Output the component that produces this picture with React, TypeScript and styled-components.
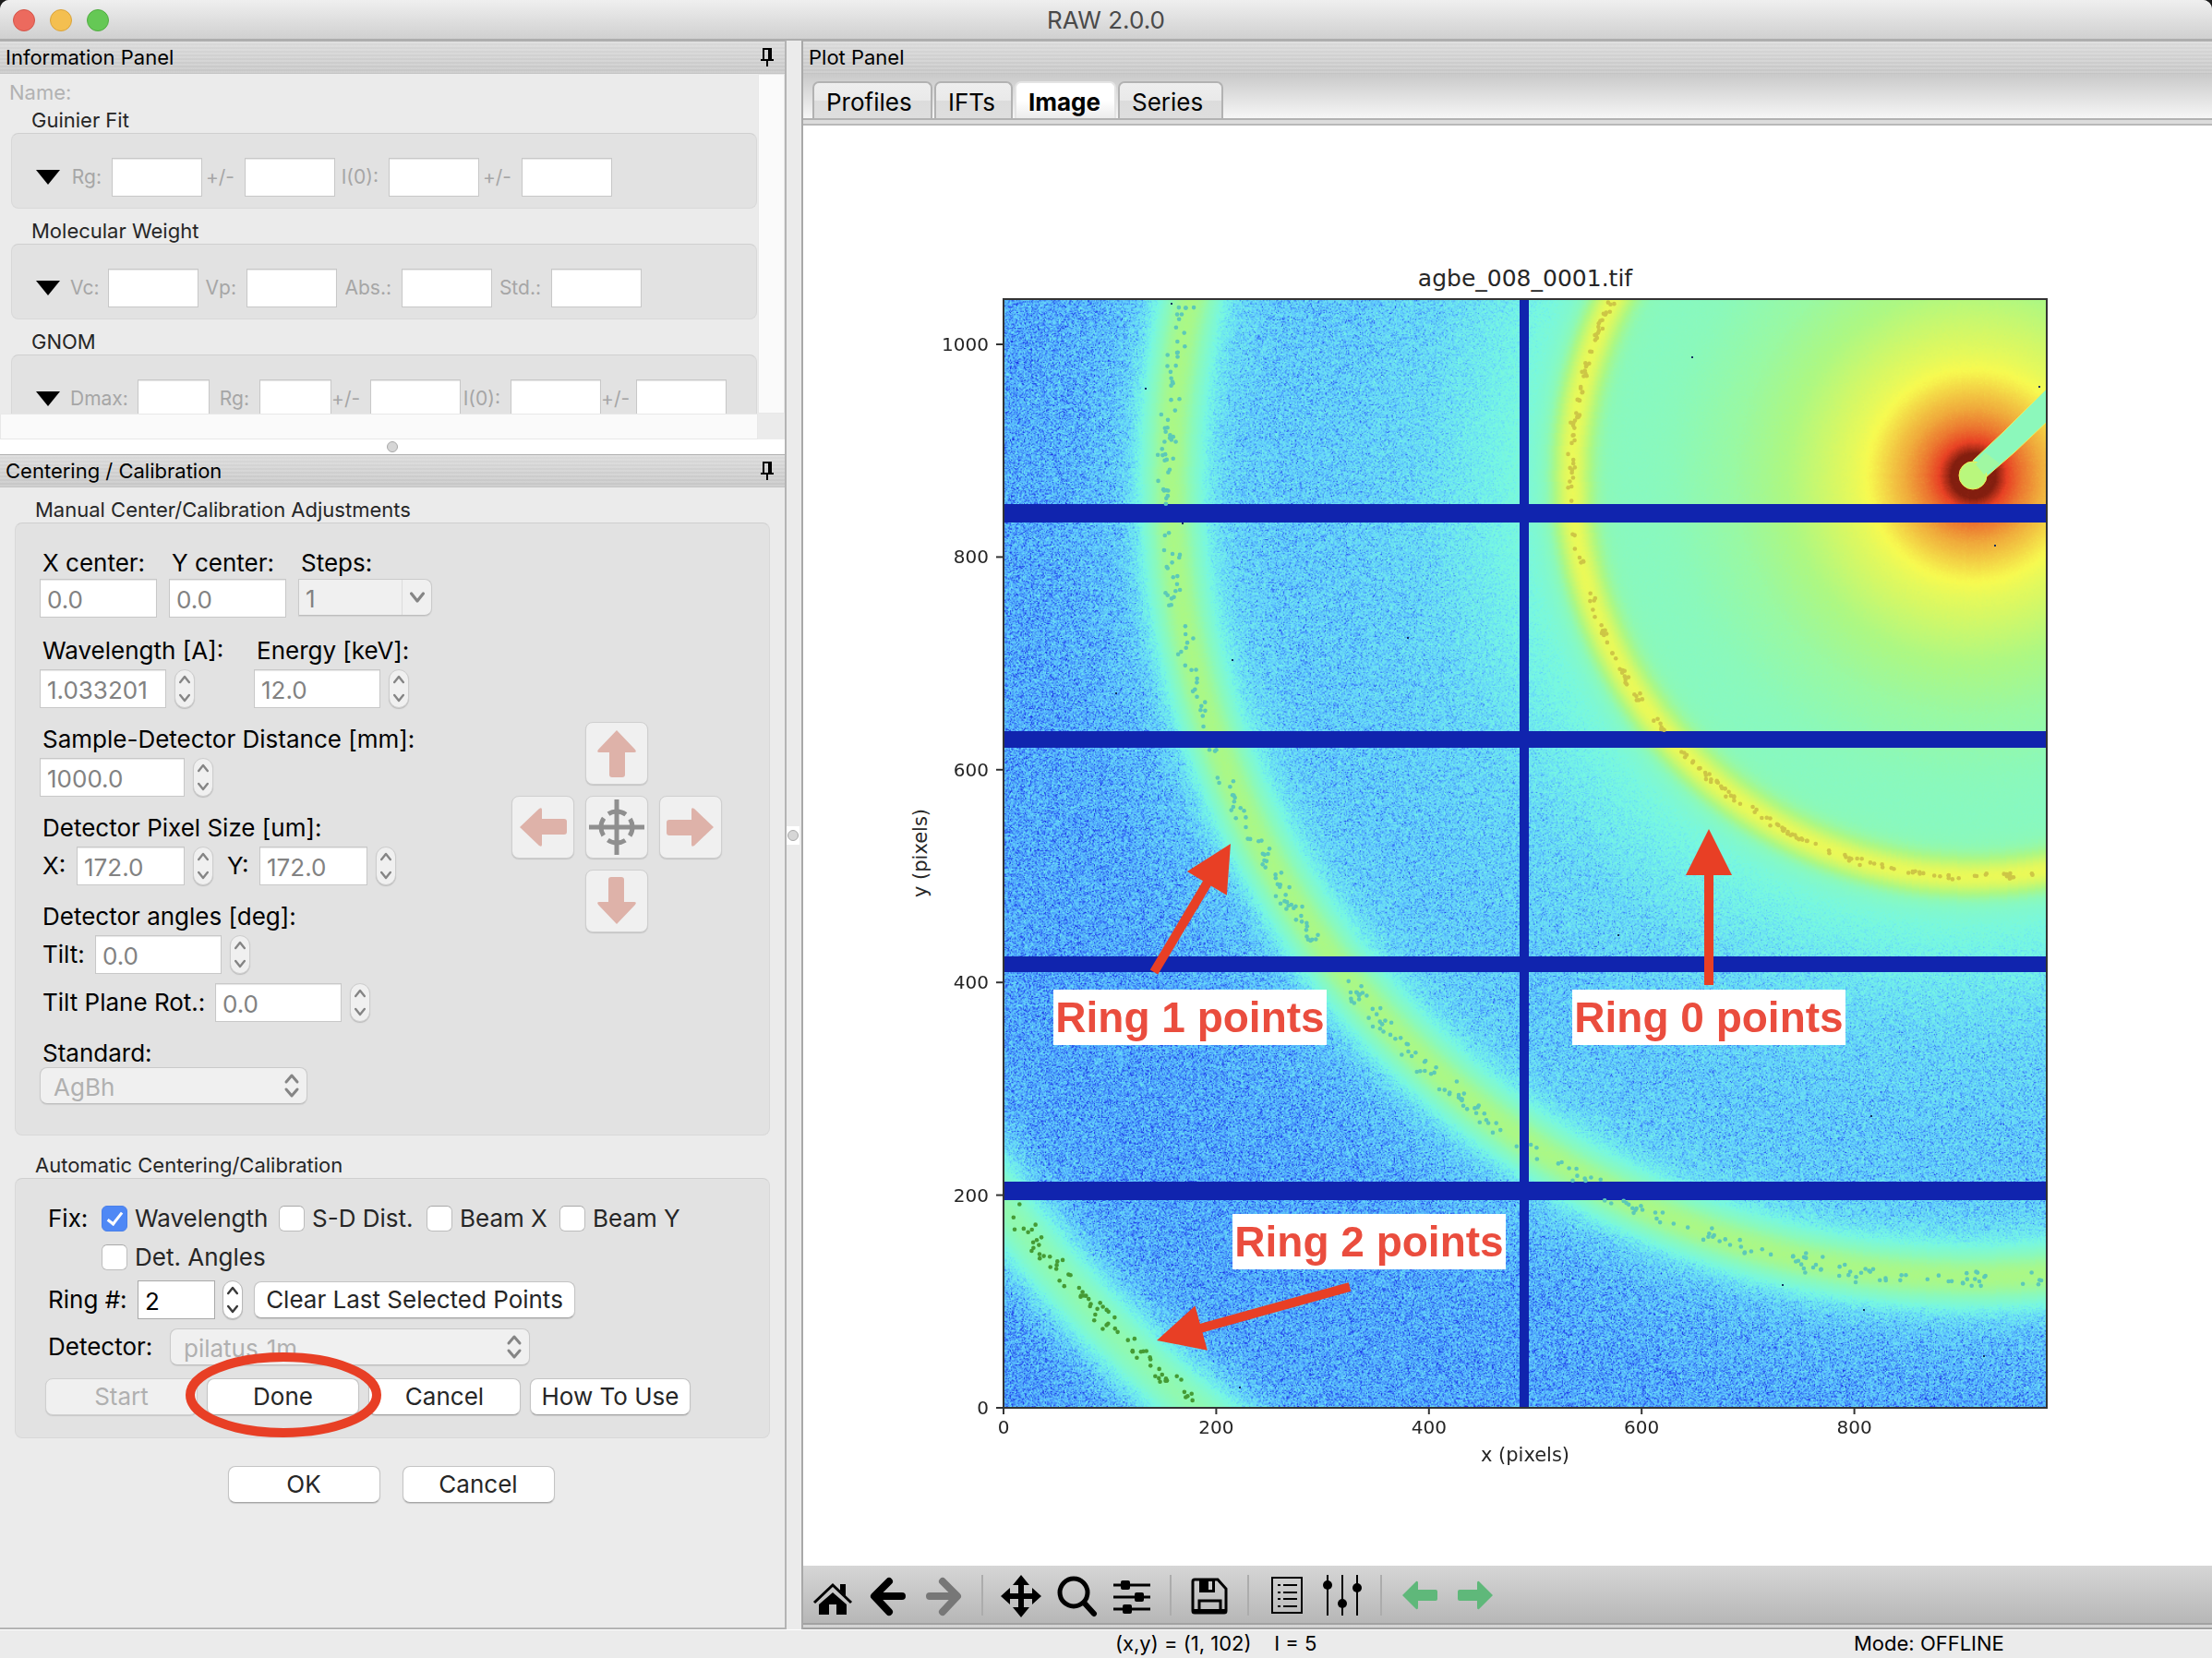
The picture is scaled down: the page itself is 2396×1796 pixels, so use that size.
import React, { useLayoutEffect, useRef } from "react";
import styled, { createGlobalStyle, css } from "styled-components";

const UI_FONT = `Inter, "Liberation Sans", sans-serif`;
const ACCENT = "#e83f25";

const GlobalStyle = createGlobalStyle`
  *, *::before, *::after { box-sizing: border-box; }
  body { margin: 0; background: #1c1c1c; font-family: ${UI_FONT}; color: #000; }
  button, input, select { font-family: inherit; margin: 0; }
`;

/* ---------- window ---------- */

const Window = styled.div`
  display: flex;
  flex-direction: column;
  height: 100vh;
  min-height: 1700px;
  background: #ebebeb;
  border-radius: 10px 10px 0 0;
  overflow: hidden;
`;

const TitleBar = styled.header`
  flex: none;
  display: grid;
  grid-template-columns: 1fr auto 1fr;
  align-items: center;
  height: 44px;
  padding: 2px 14px 0;
  background: linear-gradient(#efefef, #d0d0d0);
  border-bottom: 2px solid #adadad;
`;

const Lights = styled.div`
  display: flex;
  gap: 16px;
`;

const Light = styled.button<{ $fill: string; $edge: string }>`
  width: 24px;
  height: 24px;
  padding: 0;
  border-radius: 50%;
  background: ${(p) => p.$fill};
  border: 1px solid ${(p) => p.$edge};
`;

const WindowTitle = styled.h1`
  margin: 0;
  font-size: 26px;
  line-height: 30px;
  font-weight: 400;
  color: #4a4a4a;
`;

const Workspace = styled.main`
  flex: 1;
  min-height: 0;
  display: flex;
`;

const SideColumn = styled.div`
  flex: none;
  width: 852px;
  display: flex;
  flex-direction: column;
  border-right: 2px solid #b4b4b4;
  border-bottom: 2px solid #b4b4b4;
`;

const VerticalSash = styled.div`
  flex: none;
  width: 16px;
  display: flex;
  align-items: center;
  background: #ebebeb;
`;

const HorizontalSash = styled.div`
  flex: none;
  height: 16px;
  display: flex;
  align-items: center;
  justify-content: center;
  background: #fff;
`;

const Grip = styled.span`
  display: block;
  width: 12px;
  height: 12px;
  margin: 0 auto;
  border-radius: 50%;
  background: #d6d6d6;
  border: 1px solid #a8a8a8;
`;

const GripSlot = styled.div`
  width: 14px;
  padding: 4px 0;
  background: #fff;
`;

const Caption = styled.div`
  flex: none;
  display: flex;
  align-items: center;
  justify-content: space-between;
  height: 36px;
  padding: 0 11px 0 6px;
  background:
    repeating-linear-gradient(rgba(255, 255, 255, 0.16) 0 2px, transparent 2px 4px),
    linear-gradient(#dadada, #c6c6c6);
  border-top: 1px solid #b0b0b0;
  border-bottom: 1px solid #c4c4c4;
`;

const CaptionText = styled.h2`
  margin: 0;
  font-size: 22px;
  line-height: 26px;
  font-weight: 400;
`;

const PinButton = styled.button`
  display: flex;
  padding: 0;
  border: 0;
  background: none;
`;

/* ---------- shared controls ---------- */

const SmallLabel = styled.label<{ $w: number }>`
  flex: none;
  width: ${(p) => p.$w}px;
  padding-right: 11px;
  text-align: right;
  font-size: 21px;
  line-height: 26px;
  color: #a6a6a6;
  white-space: nowrap;
`;

const SectionTitle = styled.h3`
  margin: 0 0 1px;
  padding-left: 22px;
  font-size: 22px;
  line-height: 26px;
  font-weight: 400;
  color: #262626;
`;

const GroupBox = styled.div`
  background: #e2e2e2;
  border: 1px solid #d8d8d8;
  border-top-color: #cfcfcf;
  border-radius: 8px;
`;

const TextBox = styled.input<{ $w: number }>`
  flex: none;
  width: ${(p) => p.$w}px;
  height: 42px;
  padding: 3px 7px 0;
  font-size: 26px;
  color: #000;
  background: #fff;
  border: 1px solid #a9a9a9;
  border-radius: 0;
  outline: none;
  &:disabled {
    color: #828282;
    border-color: #c8c8c8;
    box-shadow: inset 0 1px 1px #e6e6e6;
  }
`;

const Label = styled.label<{ $w?: number }>`
  flex: none;
  display: block;
  ${(p) => p.$w && css`width: ${p.$w}px;`}
  padding-left: 3px;
  font-size: 26px;
  line-height: 30px;
  white-space: nowrap;
`;

const StepperBox = styled.span<{ $off?: boolean }>`
  flex: none;
  display: flex;
  flex-direction: column;
  width: 22px;
  height: 42px;
  overflow: hidden;
  border-radius: 11px;
  background: ${(p) => (p.$off ? "#f0f0f0" : "#fff")};
  color: ${(p) => (p.$off ? "#858585" : "#3a3a3a")};
  border: 1px solid ${(p) => (p.$off ? "#cdcdcd" : "#b8b8b8")};
  box-shadow: 0 1px 1px #bdbdbd;
`;

const StepButton = styled.button`
  flex: 1;
  display: flex;
  align-items: center;
  justify-content: center;
  padding: 0;
  border: 0;
  background: none;
  color: inherit;
`;

const Push = styled.button<{ $w: number }>`
  flex: none;
  width: ${(p) => p.$w}px;
  height: 40px;
  padding: 0;
  font-size: 26px;
  line-height: 30px;
  color: #262626;
  white-space: nowrap;
  background: #fff;
  border: 1px solid #c4c4c4;
  border-bottom-color: #a6a6a6;
  border-radius: 8px;
  box-shadow: 0 1px 1px #c8c8c8;
  &:disabled {
    color: #b0b0b0;
    background: #f0f0f0;
    border-color: #cfcfcf;
  }
`;

const SelectWrap = styled.span<{ $w: number }>`
  position: relative;
  flex: none;
  display: block;
  width: ${(p) => p.$w}px;
`;

const SelectBox = styled.select<{ $combo?: boolean }>`
  appearance: none;
  display: block;
  width: 100%;
  height: 40px;
  padding: 2px 14px 0;
  font-size: 26px;
  background: #f0f0f0;
  border: 1px solid #cacaca;
  border-bottom-color: #bebebe;
  border-radius: 8px;
  box-shadow: 0 1px 1px #d0d0d0;
  &:disabled {
    opacity: 1;
    color: #b0b0b0;
  }
  ${(p) =>
    p.$combo &&
    css`
      padding-left: 7px;
      border-radius: 0 8px 8px 0;
      &:disabled {
        color: #828282;
      }
    `}
`;

const SelectMark = styled.span<{ $combo?: boolean }>`
  position: absolute;
  top: 1px;
  right: 1px;
  bottom: 1px;
  width: 32px;
  display: flex;
  align-items: center;
  justify-content: center;
  pointer-events: none;
  ${(p) => p.$combo && css`border-left: 1px solid #dcdcdc;`}
`;

function Chevron({ up, w = 12, color = "currentColor" }: { up?: boolean; w?: number; color?: string }) {
  return (
    <svg width={w} height={w} viewBox="0 0 10 10" fill="none" stroke={color} strokeWidth="2" strokeLinecap="round" strokeLinejoin="round">
      <path d={up ? "M1 7.5 5 2.5l4 5" : "M1 2.5 5 7.5l4-5"} />
    </svg>
  );
}

function Stepper({ off, name }: { off?: boolean; name: string }) {
  return (
    <StepperBox $off={off}>
      <StepButton disabled={off} aria-label={`Increase ${name}`}><Chevron up /></StepButton>
      <StepButton disabled={off} aria-label={`Decrease ${name}`}><Chevron /></StepButton>
    </StepperBox>
  );
}

function Picker({ id, w, value, combo }: { id: string; w: number; value: string; combo?: boolean }) {
  return (
    <SelectWrap $w={w}>
      <SelectBox id={id} $combo={combo} disabled defaultValue={value}>
        <option>{value}</option>
      </SelectBox>
      <SelectMark $combo={combo}>
        {combo ? (
          <Chevron w={16} color="#858585" />
        ) : (
          <svg width="18" height="28" viewBox="0 0 18 28" fill="none" stroke="#858585" strokeWidth="3" strokeLinecap="round" strokeLinejoin="round">
            <path d="M3 10 9 3l6 7M3 18l6 7 6-7" />
          </svg>
        )}
      </SelectMark>
    </SelectWrap>
  );
}

function PinIcon() {
  return (
    <PinButton aria-label="Pin pane">
      <svg width="16" height="22" viewBox="0 0 16 22" fill="none" stroke="#000" strokeWidth="2">
        <path d="M4 14V2h7v12" />
        <path d="M11 1v13" strokeWidth="4" />
        <path d="M1 14h14M8 14v7" />
      </svg>
    </PinButton>
  );
}

/* ---------- information panel ---------- */

const InfoFrame = styled.section`
  flex: none;
  display: grid;
  grid-template-columns: 1fr 29px;
  grid-template-rows: 368px 28px;
`;

const InfoBody = styled.div`
  overflow: hidden;
  padding: 7px 1px 0 10px;
`;

const ScrollTrack = styled.div`
  background: #fafafa;
  border: 1px solid #e8e8e8;
`;

const InfoGroup = styled.div`
  margin: 0 0 11px 2px;
`;

const InfoRow = styled(GroupBox)`
  display: flex;
  align-items: center;
  height: 82px;
  padding: 14px 0 0 26px;
`;

const InfoField = styled.div`
  display: flex;
  align-items: center;
`;

const Disclosure = styled.button`
  width: 26px;
  height: 16px;
  margin-right: 11px;
  padding: 0;
  border: 0;
  background: #000;
  clip-path: polygon(0 0, 100% 0, 50% 100%);
`;

const NameLabel = styled.div`
  margin-bottom: 4px;
  font-size: 22px;
  line-height: 26px;
  color: #b2b2b2;
`;

type InfoCell = [string, number, number];
const INFO: { title: string; cells: InfoCell[] }[] = [
  { title: "Guinier Fit", cells: [["Rg:", 45, 98], ["+/-", 46, 98], ["I(0):", 58, 98], ["+/-", 46, 98]] },
  { title: "Molecular Weight", cells: [["Vc:", 41, 98], ["Vp:", 52, 98], ["Abs.:", 70, 98], ["Std.:", 64, 98]] },
  { title: "GNOM", cells: [["Dmax:", 73, 78], ["Rg:", 54, 78], ["+/-", 42, 98], ["I(0):", 54, 98], ["+/-", 38, 98]] },
];

function InformationPanel() {
  return (
    <>
      <Caption>
        <CaptionText>Information Panel</CaptionText>
        <PinIcon />
      </Caption>
      <InfoFrame>
        <InfoBody>
          <NameLabel>Name:</NameLabel>
          {INFO.map((g) => (
            <InfoGroup key={g.title}>
              <SectionTitle>{g.title}</SectionTitle>
              <InfoRow>
                <Disclosure aria-label={`Toggle ${g.title}`} />
                {g.cells.map(([label, lw, w], i) => {
                  const id = `${g.title}-${i}`;
                  return (
                    <InfoField key={id}>
                      <SmallLabel htmlFor={id} $w={lw}>{label}</SmallLabel>
                      <TextBox id={id} $w={w} disabled />
                    </InfoField>
                  );
                })}
              </InfoRow>
            </InfoGroup>
          ))}
        </InfoBody>
        <ScrollTrack />
        <ScrollTrack />
      </InfoFrame>
    </>
  );
}

/* ---------- centering panel ---------- */

const CenterBody = styled.section`
  flex: 1;
  padding: 11px 16px 0;
`;

const ManualBox = styled(GroupBox)`
  display: flex;
  align-items: center;
  justify-content: space-between;
  padding: 28px 51px 33px 26px;
  margin-bottom: 19px;
`;

const ManualFields = styled.div`
  display: flex;
  flex-direction: column;
  gap: 19px;
`;

const Line = styled.div<{ $gap?: number }>`
  display: flex;
  align-items: center;
  gap: ${(p) => p.$gap ?? 9}px;
`;

const Stack = styled.div<{ $gap?: number }>`
  display: flex;
  flex-direction: column;
  gap: ${(p) => p.$gap ?? 5}px;
`;

const CenterLine = styled(Line)`
  align-items: flex-start;
  padding-bottom: 2px;
`;

const Pad = styled.div`
  display: grid;
  grid-template-columns: repeat(3, 68px);
  grid-template-rows: repeat(3, 68px);
  gap: 12px;
`;

const PadButton = styled.button<{ $area: string }>`
  grid-area: ${(p) => p.$area};
  display: flex;
  align-items: center;
  justify-content: center;
  padding: 0;
  background: #f0f0f0;
  border: 1px solid #cfcfcf;
  border-radius: 8px;
  box-shadow: 0 1px 1px #c4c4c4;
`;

function PadArrow({ turn }: { turn: number }) {
  return (
    <svg width="56" height="56" viewBox="0 0 56 56">
      <path
        transform={`rotate(${turn} 28 28)`}
        d="M28 3 48 24q2 3-1 3H37v24q0 3-3 3H23q-3 0-3-3V27H9q-3 0-1-3z"
        fill="#deb2a9"
      />
    </svg>
  );
}

function Crosshair() {
  return (
    <svg width="62" height="62" viewBox="0 0 62 62" fill="none" stroke="#8f8f8f">
      <path d="M31 1v60M1 31h60" strokeWidth="5" />
      <circle cx="31" cy="31" r="17" strokeWidth="5" strokeDasharray="20 6.7" strokeDashoffset="10" />
    </svg>
  );
}

const AutoBox = styled(GroupBox)`
  display: flex;
  flex-direction: column;
  gap: 10px;
  padding: 28px 32px 24px;
`;

const FixGrid = styled.div`
  display: grid;
  grid-template-columns: 61px 192px 160px 144px auto;
  grid-auto-rows: 30px;
  row-gap: 12px;
  justify-content: start;
  align-items: center;
`;

const Check = styled.label<{ $col?: number }>`
  display: flex;
  align-items: center;
  gap: 8px;
  font-size: 26px;
  line-height: 30px;
  color: #262626;
  white-space: nowrap;
  ${(p) => p.$col && css`grid-column: ${p.$col};`}
`;

const Tick = styled.input`
  appearance: none;
  flex: none;
  display: grid;
  place-items: center;
  width: 28px;
  height: 28px;
  margin: 0;
  background: #fff;
  border: 1px solid #bdbdbd;
  border-top-color: #a8a8a8;
  border-radius: 6px;
  &:checked {
    background: #4f88f5;
    border-color: #4a80ea;
  }
  &:checked::after {
    content: "";
    width: 9px;
    height: 17px;
    margin-bottom: 4px;
    border: solid #fff;
    border-width: 0 3px 3px 0;
    transform: rotate(38deg);
  }
`;

const Circled = styled.span`
  position: relative;
  display: block;
`;

const RedEllipse = styled.svg`
  position: absolute;
  left: 50%;
  top: 50%;
  z-index: 2;
  width: 212px;
  height: 92px;
  margin: -48px 0 0 -106px;
  pointer-events: none;
`;

const ButtonRow = styled(Line)`
  padding-top: 4px;
`;

const DialogButtons = styled.div`
  display: flex;
  justify-content: center;
  gap: 24px;
  padding: 30px 3px 0 0;
`;

function NumberField({ id, w, value }: { id: string; w: number; value: string }) {
  return (
    <Line>
      <TextBox id={id} $w={w} disabled defaultValue={value} />
      <Stepper off name={id} />
    </Line>
  );
}

function CenteringPanel() {
  return (
    <>
      <Caption>
        <CaptionText>Centering / Calibration</CaptionText>
        <PinIcon />
      </Caption>
      <CenterBody>
        <SectionTitle>Manual Center/Calibration Adjustments</SectionTitle>
        <ManualBox>
          <ManualFields>
            <CenterLine $gap={13}>
              <Stack $gap={2}>
                <Label htmlFor="xc">X center:</Label>
                <TextBox id="xc" $w={127} disabled defaultValue="0.0" />
              </Stack>
              <Stack $gap={2}>
                <Label htmlFor="yc">Y center:</Label>
                <TextBox id="yc" $w={127} disabled defaultValue="0.0" />
              </Stack>
              <Stack $gap={2}>
                <Label htmlFor="steps">Steps:</Label>
                <Picker id="steps" w={145} value="1" combo />
              </Stack>
            </CenterLine>
            <Line $gap={32}>
              <Stack>
                <Label htmlFor="wavelength" $w={200}>Wavelength [A]:</Label>
                <NumberField id="wavelength" w={137} value="1.033201" />
              </Stack>
              <Stack>
                <Label htmlFor="energy">Energy [keV]:</Label>
                <NumberField id="energy" w={137} value="12.0" />
              </Stack>
            </Line>
            <Stack>
              <Label htmlFor="distance">Sample-Detector Distance [mm]:</Label>
              <NumberField id="distance" w={157} value="1000.0" />
            </Stack>
            <Stack>
              <Label as="div">Detector Pixel Size [um]:</Label>
              <Line $gap={12}>
                <Line $gap={0}>
                  <Label htmlFor="px" $w={40}>X:</Label>
                  <NumberField id="px" w={117} value="172.0" />
                </Line>
                <Line $gap={0}>
                  <Label htmlFor="py" $w={38}>Y:</Label>
                  <NumberField id="py" w={117} value="172.0" />
                </Line>
              </Line>
            </Stack>
            <Stack>
              <Label as="div">Detector angles [deg]:</Label>
              <Stack $gap={10}>
                <Line $gap={0}>
                  <Label htmlFor="tilt" $w={60}>Tilt:</Label>
                  <NumberField id="tilt" w={137} value="0.0" />
                </Line>
                <Line $gap={0}>
                  <Label htmlFor="rot" $w={190}>Tilt Plane Rot.:</Label>
                  <NumberField id="rot" w={137} value="0.0" />
                </Line>
              </Stack>
            </Stack>
            <Stack $gap={0}>
              <Label htmlFor="standard">Standard:</Label>
              <Picker id="standard" w={290} value="AgBh" />
            </Stack>
          </ManualFields>
          <Pad>
            <PadButton disabled $area="1 / 2" aria-label="Move up"><PadArrow turn={0} /></PadButton>
            <PadButton disabled $area="2 / 1" aria-label="Move left"><PadArrow turn={-90} /></PadButton>
            <PadButton disabled $area="2 / 2" aria-label="Pick center"><Crosshair /></PadButton>
            <PadButton disabled $area="2 / 3" aria-label="Move right"><PadArrow turn={90} /></PadButton>
            <PadButton disabled $area="3 / 2" aria-label="Move down"><PadArrow turn={180} /></PadButton>
          </Pad>
        </ManualBox>

        <SectionTitle>Automatic Centering/Calibration</SectionTitle>
        <AutoBox>
          <FixGrid>
            <Label as="div">Fix:</Label>
            <Check><Tick type="checkbox" defaultChecked />Wavelength</Check>
            <Check><Tick type="checkbox" />S-D Dist.</Check>
            <Check><Tick type="checkbox" />Beam X</Check>
            <Check><Tick type="checkbox" />Beam Y</Check>
            <Check $col={2}><Tick type="checkbox" />Det. Angles</Check>
          </FixGrid>
          <Line $gap={12}>
            <Line $gap={0}>
              <Label htmlFor="ring" $w={100}>Ring #:</Label>
              <Line $gap={8}>
                <TextBox id="ring" $w={84} defaultValue="2" />
                <Stepper name="ring" />
              </Line>
            </Line>
            <Push $w={348}>Clear Last Selected Points</Push>
          </Line>
          <Line $gap={0}>
            <Label htmlFor="detector" $w={135}>Detector:</Label>
            <Picker id="detector" w={390} value="pilatus_1m" />
          </Line>
          <ButtonRow $gap={10}>
            <Push $w={165} disabled>Start</Push>
            <Circled>
              <Push $w={165}>Done</Push>
              <RedEllipse viewBox="0 0 212 92">
                <ellipse cx="106" cy="46" rx="101" ry="41" fill="none" stroke={ACCENT} strokeWidth="10" />
              </RedEllipse>
            </Circled>
            <Push $w={165}>Cancel</Push>
            <Push $w={174}>How To Use</Push>
          </ButtonRow>
        </AutoBox>
        <DialogButtons>
          <Push $w={165}>OK</Push>
          <Push $w={165}>Cancel</Push>
        </DialogButtons>
      </CenterBody>
    </>
  );
}

/* ---------- plot panel ---------- */

const PlotColumn = styled.section`
  flex: 1;
  min-width: 0;
  display: flex;
  flex-direction: column;
  border-left: 2px solid #a8a8a8;
`;

const TabStrip = styled.nav`
  flex: none;
  display: flex;
  align-items: flex-end;
  gap: 2px;
  height: 48px;
  padding-left: 10px;
  background: linear-gradient(#c9c9c9, #f6f6f6);
`;

const Tab = styled.button<{ $w: number; $active?: boolean }>`
  width: ${(p) => p.$w}px;
  height: 40px;
  padding: 4px 0 0 13px;
  text-align: left;
  font-size: 26px;
  line-height: 30px;
  font-weight: ${(p) => (p.$active ? 700 : 400)};
  background: ${(p) =>
    p.$active ? "linear-gradient(#fff 50%, #ececec)" : "linear-gradient(#eee 0, #e9e9e9 50%, #dcdcdc 50%, #dedede)"};
  border: 2px solid #b2b2b2;
  border-bottom: 0;
  border-radius: 7px 7px 0 0;
  ${(p) => p.$active && css`border-color: #e4e4e4;`}
`;

const TabBase = styled.div`
  flex: none;
  height: 8px;
  background: #dcdcdc;
  border-top: 2px solid #b2b2b2;
  border-bottom: 2px solid #b8b8b8;
`;

const PlotArea = styled.div`
  flex: 1;
  min-height: 0;
  background: #fff;
`;

const Chart = styled.svg`
  display: block;
  width: 100%;
  height: 100%;
`;

const Frame = styled.canvas`
  display: block;
  width: 100%;
  height: 100%;
`;

const COLS = 981;
const ROWS = 1043;
const BEAM = { x: 2137, y: 515 };
const AX = { left: 1087, right: 2217, top: 324, bottom: 1524 };
const UNIT = 1.152;

const COLOUR_STOPS: [number, number, number, number][] = [
  [0, 16, 36, 174],
  [0.1, 32, 64, 240],
  [0.25, 74, 158, 251],
  [0.34, 100, 210, 253],
  [0.42, 118, 248, 228],
  [0.5, 140, 249, 185],
  [0.57, 172, 248, 132],
  [0.64, 213, 248, 102],
  [0.7, 247, 250, 80],
  [0.8, 240, 172, 60],
  [0.9, 232, 65, 36],
  [1, 130, 30, 15],
];

const PROFILE: [number, number][] = [
  [0, 1], [21, 1], [32, 0.9], [46, 0.85], [72, 0.78], [96, 0.71], [115, 0.67], [140, 0.63],
  [175, 0.575], [225, 0.53], [290, 0.495], [340, 0.475], [400, 0.44], [440, 0.42], [520, 0.365],
  [600, 0.34], [680, 0.315], [800, 0.295], [900, 0.285], [1030, 0.28], [1300, 0.26],
];

/* centre, sigma, height of each ring and of its diffuse halo */
const RINGS: [number, number, number][] = [
  [378, 13, 0.18],
  [378, 28, 0.045],
  [755, 21, 0.21],
  [748, 60, 0.055],
  [1142, 24, 0.21],
  [1142, 50, 0.03],
];

function seeded(seed: number) {
  let s = seed;
  return () => {
    s = (s + 0x6d2b79f5) | 0;
    let t = Math.imul(s ^ (s >>> 15), 1 | s);
    t = (t + Math.imul(t ^ (t >>> 7), 61 | t)) ^ t;
    return ((t ^ (t >>> 14)) >>> 0) / 4294967296;
  };
}

function lerpTable(table: number[][], v: number, col: number) {
  if (v <= table[0][0]) return table[0][col];
  for (let i = 1; i < table.length; i++) {
    if (v <= table[i][0]) {
      const a = table[i - 1];
      const b = table[i];
      return a[col] + ((b[col] - a[col]) * (v - a[0])) / (b[0] - a[0]);
    }
  }
  return table[table.length - 1][col];
}

function paintDetector(canvas: HTMLCanvasElement) {
  const ctx = canvas.getContext("2d");
  if (!ctx) return;
  const palette = Array.from({ length: 1001 }, (_, i) => [1, 2, 3].map((c) => lerpTable(COLOUR_STOPS, i / 1000, c)));
  const radial = Array.from({ length: 1500 }, (_, r) => {
    let v = lerpTable(PROFILE, r, 1);
    for (const [centre, sigma, height] of RINGS) v += height * Math.exp(-((r - centre) ** 2) / (2 * sigma * sigma));
    return v;
  });
  const random = seeded(7);
  const image = ctx.createImageData(COLS, ROWS);
  const bx = (BEAM.x - AX.left) / UNIT;
  const by = (BEAM.y - AX.top) / UNIT;
  for (let y = 0; y < ROWS; y++) {
    for (let x = 0; x < COLS; x++) {
      const v = radial[Math.round(Math.hypot(x - bx, y - by))];
      let noise = random() + random() + random() - 1.5;
      noise = noise < 0 ? noise * 1.3 - noise * noise * 0.8 : noise * 0.8;
      const level = v + noise * 0.125 * Math.min(1, Math.max(0.03, (0.46 - v) / 0.17));
      const rgb = palette[Math.round(Math.min(1, Math.max(0.08, level)) * 1000)];
      const at = (y * COLS + x) * 4;
      image.data[at] = rgb[0];
      image.data[at + 1] = rgb[1];
      image.data[at + 2] = rgb[2];
      image.data[at + 3] = 255;
    }
  }
  ctx.putImageData(image, 0, 0);
}

function DetectorFrame() {
  const ref = useRef<HTMLCanvasElement>(null);
  useLayoutEffect(() => {
    if (ref.current) paintDetector(ref.current);
  }, []);
  return <Frame ref={ref} width={COLS} height={ROWS} />;
}

const inGap = (x: number, y: number) =>
  (y > 546 && y < 566) || (y > 792 && y < 810) || (y > 1036 && y < 1053) || (y > 1280 && y < 1300) || (x > 1646 && x < 1656);

function ringPoints(seed: number, radius: number, from: number, to: number, count: number, spread: number) {
  const random = seeded(seed);
  const pts: [number, number][] = [];
  while (pts.length < count) {
    const base = from + (to - from) * random();
    const cluster = 1 + Math.floor(random() * 3);
    for (let i = 0; i < cluster; i++) {
      const a = ((base + (random() - 0.5) * 2.4) * Math.PI) / 180;
      const r = radius + (random() + random() - 1) * spread;
      const x = BEAM.x - Math.cos(a) * r;
      const y = BEAM.y + Math.sin(a) * r;
      if (x > AX.left + 3 && x < AX.right - 3 && y > AX.top + 3 && y < AX.bottom - 3 && !inGap(x, y)) pts.push([x, y]);
    }
  }
  return pts;
}

const POINTS = [
  { fill: "#cdc646", pts: ringPoints(5, 435, -26, 101, 210, 5) },
  { fill: "#5cc9b8", pts: ringPoints(11, 873, -13, 96, 320, 12) },
  { fill: "#459a34", pts: ringPoints(29, 1311, 36, 51, 74, 13) },
];

const SPECKS = [
  [1269, 329], [1833, 387], [2209, 419], [2161, 591], [1753, 1013], [2027, 1209], [1931, 1392], [2019, 1419],
  [2149, 1469], [1343, 1503], [1281, 567], [1241, 421], [1525, 691], [1209, 751], [1335, 715],
];

function Arrow({ x1, y1, x2, y2 }: { x1: number; y1: number; x2: number; y2: number }) {
  const len = Math.hypot(x2 - x1, y2 - y1);
  const turn = (Math.atan2(y2 - y1, x2 - x1) * 180) / Math.PI;
  return (
    <g transform={`translate(${x1} ${y1}) rotate(${turn})`} fill={ACCENT}>
      <rect x="0" y="-5" width={len - 45} height="10" />
      <path d={`M${len} 0 L${len - 50} -25 V25 Z`} />
    </g>
  );
}

function Note({ x, y, text }: { x: number; y: number; text: string }) {
  return (
    <g>
      <rect x={x} y={y} width="296" height="60" fill="#fff" />
      <text x={x + 148} y={y + 46} textAnchor="middle" fontFamily="Liberation Sans, Arial, sans-serif" fontWeight="700" fontSize="46" fill="#ea4d3e">
        {text}
      </text>
    </g>
  );
}

function DetectorPlot() {
  return (
    <Chart viewBox="870 136 1526 1560" preserveAspectRatio="xMidYMid meet" role="img" aria-label="agbe_008_0001.tif">
      <foreignObject x={AX.left} y={AX.top} width={AX.right - AX.left} height={AX.bottom - AX.top}>
        <DetectorFrame />
      </foreignObject>
      <path d="M2137 499 2170 468 2217 421V457L2182 490 2160 509 2150 518z" fill="#8cf8bb" stroke="#e8f060" strokeWidth="1" />
      <circle cx="2137" cy="515" r="15" fill="#b9f77d" stroke="#eef255" strokeWidth="1" />
      <path d="M2140 503 2150 490 2166 502 2149 514z" fill="#a0f8a2" />
      <g fill="#1024ae">
        <rect x="1087" y="546" width="1130" height="20" />
        <rect x="1087" y="792" width="1130" height="18" />
        <rect x="1087" y="1036" width="1130" height="17" />
        <rect x="1087" y="1280" width="1130" height="20" />
        <rect x="1646" y="324" width="10" height="1200" />
      </g>
      {POINTS.map((s) => (
        <g key={s.fill} fill={s.fill}>
          {s.pts.map(([x, y], i) => (
            <circle key={i} cx={x} cy={y} r="2.3" />
          ))}
        </g>
      ))}
      <g fill="#123060">
        {SPECKS.map(([x, y]) => (
          <rect key={`${x}-${y}`} x={x - 1} y={y - 1} width="2" height="2" />
        ))}
      </g>
      <rect x={AX.left} y={AX.top} width={AX.right - AX.left} height={AX.bottom - AX.top + 1} fill="none" stroke="#333" strokeWidth="2" />

      <g fontFamily="DejaVu Sans, sans-serif" fontSize="20" fill="#262626" stroke="none">
        {[0, 200, 400, 600, 800, 1000].map((v) => {
          const y = 1525 - v * UNIT;
          return (
            <g key={v}>
              <path d={`M1079 ${y}H1087`} stroke="#333" strokeWidth="2" />
              <text x="1071" y={y + 7} textAnchor="end">{v}</text>
            </g>
          );
        })}
        {[0, 200, 400, 600, 800].map((v) => {
          const x = 1087 + v * UNIT;
          return (
            <g key={v}>
              <path d={`M${x} 1525V1532`} stroke="#333" strokeWidth="2" />
              <text x={x} y="1553" textAnchor="middle">{v}</text>
            </g>
          );
        })}
        <text x="1652" y="1583" textAnchor="middle" fontSize="21">x (pixels)</text>
        <text transform="translate(1004 924) rotate(-90)" textAnchor="middle" fontSize="21">y (pixels)</text>
        <text x="1652" y="310" textAnchor="middle" fontSize="25">agbe_008_0001.tif</text>
      </g>

      <Arrow x1={1250} y1={1053} x2={1333} y2={914} />
      <Arrow x1={1851} y1={1067} x2={1851} y2={898} />
      <Arrow x1={1462} y1={1394} x2={1253} y2={1452} />
      <Note x={1141} y={1072} text="Ring 1 points" />
      <Note x={1703} y={1072} text="Ring 0 points" />
      <Note x={1335} y={1315} text="Ring 2 points" />
    </Chart>
  );
}

/* ---------- toolbar ---------- */

const ToolBar = styled.div`
  flex: none;
  display: flex;
  align-items: center;
  height: 69px;
  padding: 2px 0 0 2px;
  background: linear-gradient(#d6d6d6, #b7b7b7 62px);
  border-bottom: 7px double #a2a2a2;
`;

const ToolButton = styled.button`
  width: 60px;
  height: 56px;
  display: flex;
  align-items: center;
  justify-content: center;
  padding: 0;
  border: 0;
  background: none;
`;

const Divider = styled.span`
  width: 24px;
  height: 44px;
  display: flex;
  justify-content: center;
  &::before {
    content: "";
    width: 2px;
    background: #acacac;
  }
`;

const greenArrow = "M5 24 20 9q2-1 2 2v7h19q2 0 2 2v8q0 2-2 2H22v7q0 3-2 2z";

const TOOLS: { name: string; art?: React.ReactNode }[] = [
  {
    name: "Home",
    art: (
      <>
        <path d="M24 21 39 34V45H28V34H20V45H9V34z" />
        <path d="M4 32 24 13 44 32" fill="none" stroke="#000" strokeWidth="3" />
        <path d="M32 12h6v13l-6-6z" />
      </>
    ),
  },
  { name: "Back", art: <path d="M25 9 9 25l16 17M10 25h29" fill="none" stroke="#000" strokeWidth="8" strokeLinecap="round" strokeLinejoin="round" /> },
  { name: "Forward", art: <path d="M23 9 39 25 23 42M38 25H9" fill="none" stroke="#777" strokeWidth="8" strokeLinecap="round" strokeLinejoin="round" /> },
  { name: "|1" },
  { name: "Pan", art: <path d="M24 2l9 11h-6v9h9v-6l10 9-10 9v-6h-9v9h6l-9 11-9-11h6v-9h-9v6L2 25l10-9v6h9v-9h-6z" /> },
  {
    name: "Zoom",
    art: (
      <g fill="none" stroke="#000" strokeLinecap="round">
        <circle cx="21" cy="21" r="15" strokeWidth="5" />
        <path d="M33 33 43 44" strokeWidth="6" />
      </g>
    ),
  },
  {
    name: "Configure subplots",
    art: (
      <>
        <path d="M4 13h40M4 26h40M4 39h40" stroke="#000" strokeWidth="3" />
        <rect x="12" y="8" width="10" height="10" rx="2" />
        <rect x="27" y="21" width="10" height="10" rx="2" />
        <rect x="14" y="34" width="10" height="10" rx="2" />
      </>
    ),
  },
  { name: "|2" },
  {
    name: "Save",
    art: (
      <>
        <path d="M8 7H33L42 17V41q0 2-2 2H8q-2 0-2-2V9q0-2 2-2z" fill="none" stroke="#000" strokeWidth="3" />
        <path d="M13 7h17v14H13z" />
        <path d="M23 9h4v9h-4z" fill="#ccc" />
        <path d="M13 43V30h23v13" fill="none" stroke="#000" strokeWidth="3" />
        <path d="M6 41h36" stroke="#000" strokeWidth="4" />
      </>
    ),
  },
  { name: "|3" },
  {
    name: "Header list",
    art: (
      <g fill="none" stroke="#000" strokeWidth="2">
        <rect x="8" y="5" width="32" height="38" />
        <path d="M20 13h15M20 21h15M20 28h15M20 36h15M14 13h3M14 21h3M14 28h3M14 36h3" />
      </g>
    ),
  },
  {
    name: "Image display settings",
    art: (
      <>
        <path d="M8 2v44M24 2v44M40 2v44" stroke="#000" strokeWidth="2" />
        <circle cx="8" cy="13" r="5" />
        <circle cx="24" cy="33" r="5" />
        <circle cx="40" cy="16" r="5" />
      </>
    ),
  },
  { name: "|4" },
  { name: "Previous image", art: <path d={greenArrow} fill="#5fb87a" /> },
  { name: "Next image", art: <path d={greenArrow} fill="#5fb87a" transform="rotate(180 24 24)" /> },
];

function PlotToolBar() {
  return (
    <ToolBar>
      {TOOLS.map((t) =>
        t.art ? (
          <ToolButton key={t.name} aria-label={t.name}>
            <svg width="48" height="48" viewBox="0 0 48 48">{t.art}</svg>
          </ToolButton>
        ) : (
          <Divider key={t.name} />
        ),
      )}
    </ToolBar>
  );
}

const StatusBar = styled.footer`
  flex: none;
  display: grid;
  grid-template-columns: 1208fr 800fr 388fr;
  height: 31px;
  border-top: 1px solid #fff;
  font-size: 22px;
  line-height: 28px;
  white-space: pre;
`;

export default function App() {
  return (
    <>
      <GlobalStyle />
      <Window>
        <TitleBar>
          <Lights>
            <Light $fill="#ec6a5e" $edge="#d35549" aria-label="Close" />
            <Light $fill="#f4bf50" $edge="#d9a33c" aria-label="Minimize" />
            <Light $fill="#65c855" $edge="#52ac43" aria-label="Zoom window" />
          </Lights>
          <WindowTitle>RAW 2.0.0</WindowTitle>
        </TitleBar>
        <Workspace>
          <SideColumn>
            <InformationPanel />
            <HorizontalSash><Grip /></HorizontalSash>
            <CenteringPanel />
          </SideColumn>
          <VerticalSash><GripSlot><Grip /></GripSlot></VerticalSash>
          <PlotColumn>
            <Caption><CaptionText>Plot Panel</CaptionText></Caption>
            <TabStrip>
              <Tab $w={130}>Profiles</Tab>
              <Tab $w={85}>IFTs</Tab>
              <Tab $w={110} $active>Image</Tab>
              <Tab $w={114}>Series</Tab>
            </TabStrip>
            <TabBase />
            <PlotArea><DetectorPlot /></PlotArea>
            <PlotToolBar />
          </PlotColumn>
        </Workspace>
        <StatusBar>
          <span />
          <span>(x,y) = (1, 102)    I = 5</span>
          <span>Mode: OFFLINE</span>
        </StatusBar>
      </Window>
    </>
  );
}
